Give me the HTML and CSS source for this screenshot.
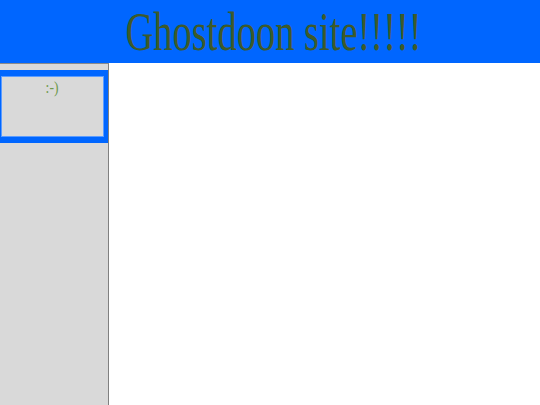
FILE: index.html
```html
<!DOCTYPE html>
<html>
<head>
<meta charset="utf-8">
<link rel="stylesheet" href="styles.css">
</head>
<body>
<div class="header"><h1 class="title">Ghostdoon site!!!!!</h1></div>
<div class="main">
  <div class="sidebar">
    <div class="box"><span class="smiley">:-)</span></div>
  </div>
  <div class="content"></div>
</div>
</body>
</html>
```

FILE: styles.css
```css
html, body {
  margin: 0;
  padding: 0;
  height: 100%;
  background: #ffffff;
  font-family: "Liberation Serif", "Times New Roman", serif;
}
body {
  display: flex;
  flex-direction: column;
  overflow: hidden;
}
.header {
  height: 63px;
  background: #0066ff;
  display: flex;
  justify-content: center;
  align-items: flex-start;
  flex: none;
  padding-left: 8px;
}
.title {
  margin: 0;
  font-weight: normal;
  font-size: 55px;
  line-height: 63px;
  color: #3d5a2a;
  transform: scaleX(0.7);
  white-space: nowrap;
}
.main {
  flex: 1;
  display: flex;
}
.sidebar {
  width: 108px;
  background: #d9d9d9;
  border-top: 1px solid #8a8a8a;
  border-right: 1px solid #808080;
  padding-top: 6px;
}
.box {
  box-sizing: border-box;
  margin-left: -3px;
  width: calc(100% + 3px);
  height: 73px;
  border-style: solid;
  border-color: #0066ff;
  border-width: 6px 4px 6px 4px;
  box-shadow: inset 0 0 0 1px #5c9cff;
  text-align: center;
  padding-top: 2px;
}
.smiley {
  display: inline-block;
  font-size: 17px;
  color: #6f9a4e;
  transform: scaleX(0.8);
}
.content {
  flex: 1;
  background: #ffffff;
}
```
